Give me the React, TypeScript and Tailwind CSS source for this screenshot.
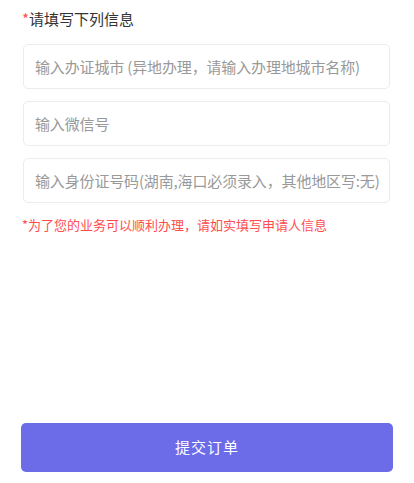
import { useState } from "react";

const fields = [
  { key: "city", placeholder: "输入办证城市 (异地办理，请输入办理地城市名称)" },
  { key: "wechat", placeholder: "输入微信号" },
  { key: "idcard", placeholder: "输入身份证号码(湖南,海口必须录入，其他地区写:无)" },
];

export default function App() {
  const [values, setValues] = useState<Record<string, string>>({});

  return (
    <div
      className="flex h-[483px] w-[414px] flex-col bg-white"
      style={{ fontFamily: '"Noto Sans CJK SC", "Liberation Sans", sans-serif' }}
    >
      <div className="px-[22px] pt-[8px]">
        <div className="text-[15px] leading-[22px] text-[#333]">
          <span className="text-[#ff4d4f]">*</span>请填写下列信息
        </div>

        <div className="mt-[14px] flex flex-col gap-[12px] pl-[1px] pr-[2px]">
          {fields.map((f) => (
            <input
              key={f.key}
              className="h-[45px] w-full rounded-[5px] border border-[#ececec] bg-white pl-[11px] pr-[2px] text-[15px] tracking-[-0.15px] text-[#333] outline-none placeholder:text-[#999]"
              placeholder={f.placeholder}
              value={values[f.key] ?? ""}
              onChange={(e) => setValues((v) => ({ ...v, [f.key]: e.target.value }))}
            />
          ))}
        </div>

        <div className="mt-[13px] text-[13px] leading-[18px] text-[#ff4d4f]">
          *为了您的业务可以顺利办理，请如实填写申请人信息
        </div>
      </div>

      <div className="mt-auto px-[21px] pb-[11px]">
        <button
          type="button"
          className="h-[49px] w-full rounded-[5px] bg-[#6c6ce9] text-[15px] tracking-[1px] text-white"
        >
          提交订单
        </button>
      </div>
    </div>
  );
}
